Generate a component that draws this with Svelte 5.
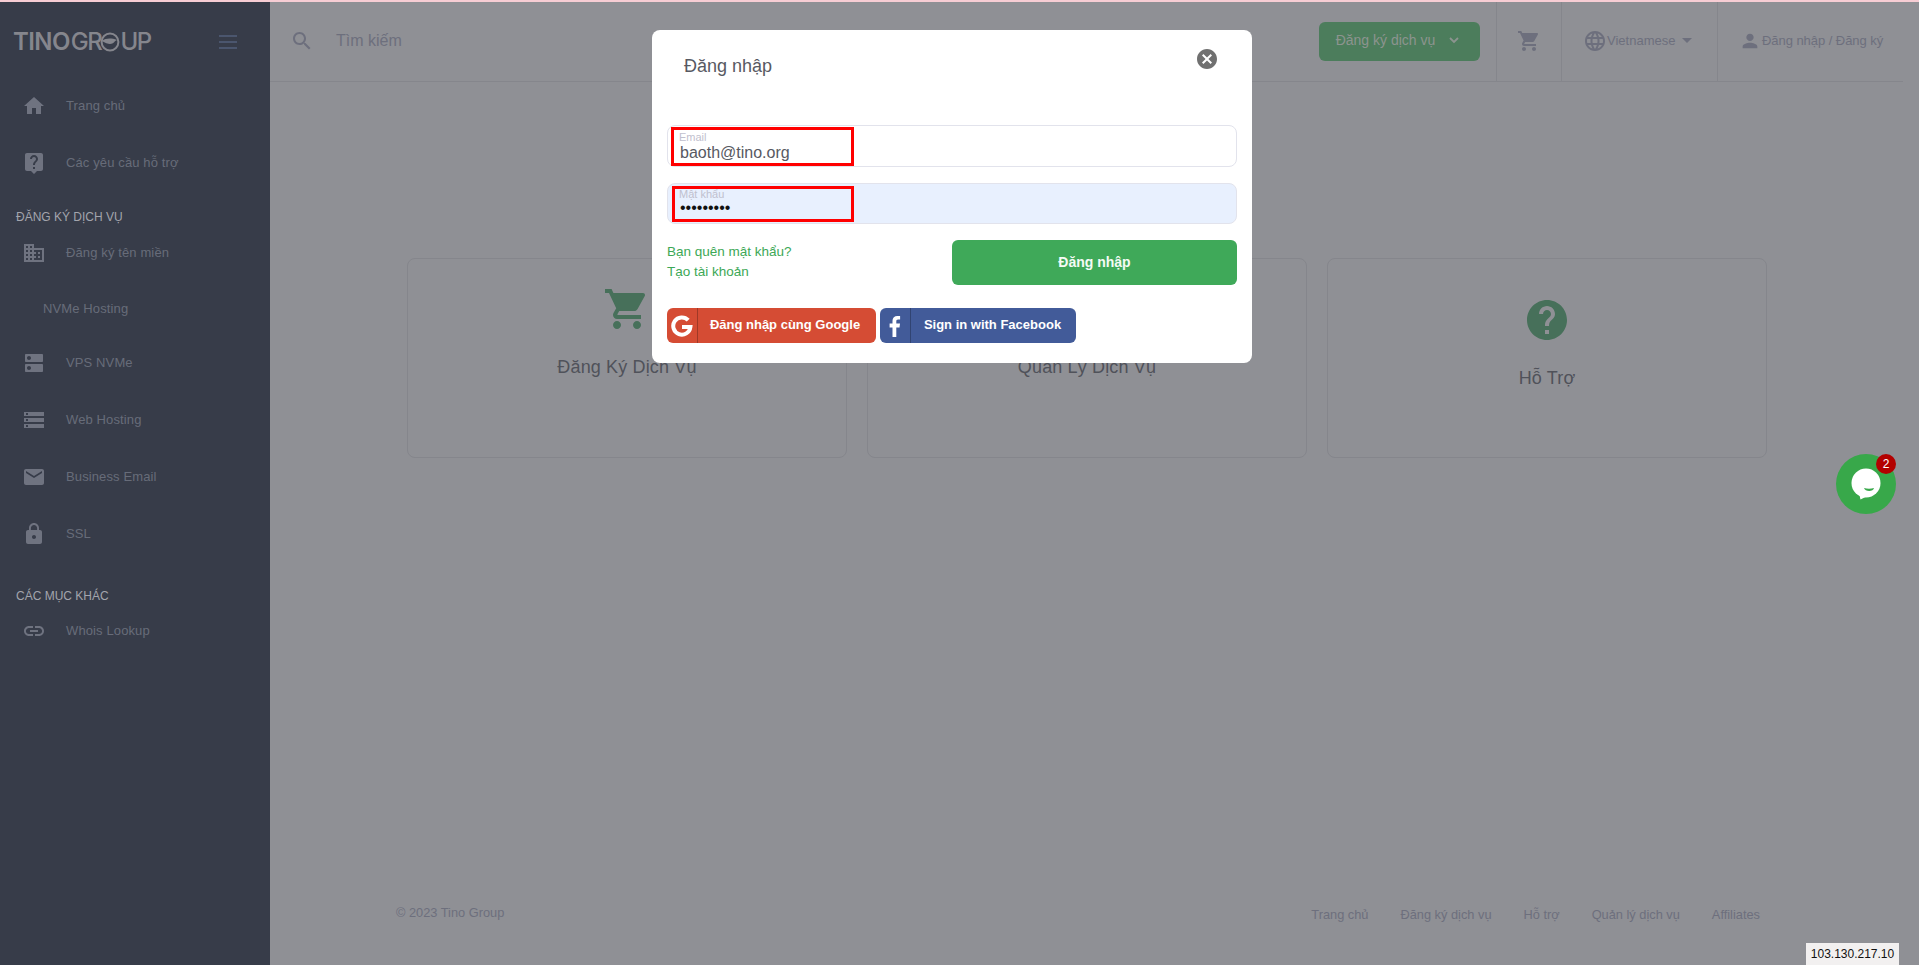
<script>
  const ic = {
    home: 'M10 20v-6h4v6h5v-8h3L12 3 2 12h3v8z',
    help: 'M19 2H5c-1.11 0-2 .9-2 2v14c0 1.1.89 2 2 2h4l3 3 3-3h4c1.1 0 2-.9 2-2V4c0-1.1-.9-2-2-2zm-6 16h-2v-2h2v2zm2.07-7.75l-.9.92C13.45 11.9 13 12.5 13 14h-2v-.5c0-1.1.45-2.1 1.17-2.83l1.24-1.26c.37-.36.59-.86.59-1.41 0-1.1-.9-2-2-2s-2 .9-2 2H8c0-2.21 1.79-4 4-4s4 1.79 4 4c0 .88-.36 1.68-.93 2.25z',
    domain: 'M12 7V3H2v18h20V7H12zM6 19H4v-2h2v2zm0-4H4v-2h2v2zm0-4H4V9h2v2zm0-4H4V5h2v2zm4 12H8v-2h2v2zm0-4H8v-2h2v2zm0-4H8V9h2v2zm0-4H8V5h2v2zm10 12h-8v-2h2v-2h-2v-2h2v-2h-2V9h8v10zm-2-8h-2v2h2v-2zm0 4h-2v2h2v-2z',
    dns: 'M20 13H4c-.55 0-1 .45-1 1v6c0 .55.45 1 1 1h16c.55 0 1-.45 1-1v-6c0-.55-.45-1-1-1zM7 19c-1.1 0-2-.9-2-2s.9-2 2-2 2 .9 2 2-.9 2-2 2zM20 3H4c-.55 0-1 .45-1 1v6c0 .55.45 1 1 1h16c.55 0 1-.45 1-1V4c0-.55-.45-1-1-1zM7 9c-1.1 0-2-.9-2-2s.9-2 2-2 2 .9 2 2-.9 2-2 2z',
    storage: 'M2 20h20v-4H2v4zm2-3h2v2H4v-2zM2 4v4h20V4H2zm4 3H4V5h2v2zm-4 7h20v-4H2v4zm2-3h2v2H4v-2z',
    email: 'M20 4H4c-1.1 0-1.99.9-1.99 2L2 18c0 1.1.9 2 2 2h16c1.1 0 2-.9 2-2V6c0-1.1-.9-2-2-2zm0 4l-8 5-8-5V6l8 5 8-5v2z',
    lock: 'M18 8h-1V6c0-2.76-2.24-5-5-5S7 3.24 7 6v2H6c-1.1 0-2 .9-2 2v10c0 1.1.9 2 2 2h12c1.1 0 2-.9 2-2V10c0-1.1-.9-2-2-2zm-6 9c-1.1 0-2-.9-2-2s.9-2 2-2 2 .9 2 2-.9 2-2 2zm3.1-9H8.9V6c0-1.71 1.39-3.1 3.1-3.1 1.71 0 3.1 1.39 3.1 3.1v2z',
    link: 'M3.9 12c0-1.71 1.39-3.1 3.1-3.1h4V7H7c-2.76 0-5 2.24-5 5s2.24 5 5 5h4v-1.9H7c-1.71 0-3.1-1.39-3.1-3.1zM8 13h8v-2H8v2zm9-6h-4v1.9h4c1.71 0 3.1 1.39 3.1 3.1s-1.39 3.1-3.1 3.1h-4V17h4c2.76 0 5-2.24 5-5s-2.24-5-5-5z',
    search: 'M15.5 14h-.79l-.28-.27C15.41 12.59 16 11.11 16 9.5 16 5.91 13.09 3 9.5 3S3 5.91 3 9.5 5.91 16 9.5 16c1.61 0 3.09-.59 4.23-1.57l.27.28v.79l5 4.99L20.49 19l-4.99-5zm-6 0C7.01 14 5 11.99 5 9.5S7.01 5 9.5 5 14 7.01 14 9.5 11.99 14 9.5 14z',
    cart: 'M7 18c-1.1 0-1.99.9-1.99 2S5.9 22 7 22s2-.9 2-2-.9-2-2-2zM1 2v2h2l3.6 7.59-1.35 2.45c-.16.28-.25.61-.25.96 0 1.1.9 2 2 2h12v-2H7.42c-.14 0-.25-.11-.25-.25l.03-.12.9-1.63h7.45c.75 0 1.41-.41 1.75-1.03l3.58-6.47c.08-.14.12-.31.12-.48 0-.55-.45-1-1-1H5.21l-.94-2H1zm16 16c-1.1 0-1.99.9-1.99 2s.89 2 1.99 2 2-.9 2-2-.9-2-2-2z',
    globe: 'M11.99 2C6.47 2 2 6.48 2 12s4.47 10 9.99 10C17.52 22 22 17.52 22 12S17.52 2 11.99 2zm6.93 6h-2.95c-.32-1.25-.78-2.45-1.38-3.56 1.84.63 3.37 1.91 4.33 3.56zM12 4.04c.83 1.2 1.48 2.53 1.91 3.96h-3.82c.43-1.43 1.08-2.76 1.91-3.96zM4.26 14C4.1 13.36 4 12.69 4 12s.1-1.36.26-2h3.38c-.08.66-.14 1.32-.14 2 0 .68.06 1.34.14 2H4.26zm.82 2h2.95c.32 1.25.78 2.45 1.38 3.56-1.84-.63-3.37-1.9-4.33-3.56zm2.95-8H5.08c.96-1.66 2.49-2.93 4.33-3.56C8.81 5.55 8.35 6.75 8.03 8zM12 19.96c-.83-1.2-1.48-2.53-1.91-3.96h3.82c-.43 1.43-1.08 2.76-1.91 3.96zM14.34 14H9.66c-.09-.66-.16-1.32-.16-2 0-.68.07-1.35.16-2h4.68c.09.65.16 1.32.16 2 0 .68-.07 1.34-.16 2zm.25 5.56c.6-1.11 1.06-2.31 1.38-3.56h2.95c-.96 1.65-2.49 2.93-4.33 3.56zM16.36 14c.08-.66.14-1.32.14-2 0-.68-.06-1.34-.14-2h3.38c.16.64.26 1.31.26 2s-.1 1.36-.26 2h-3.38z',
    person: 'M12 12c2.21 0 4-1.79 4-4s-1.79-4-4-4-4 1.79-4 4 1.79 4 4 4zm0 2c-2.67 0-8 1.34-8 4v2h16v-2c0-2.66-5.33-4-8-4z',
    circleHelp: 'M12 2C6.48 2 2 6.48 2 12s4.48 10 10 10 10-4.48 10-10S17.52 2 12 2zm1 17h-2v-2h2v2zm2.07-7.75l-.9.92C13.45 12.9 13 13.5 13 15h-2v-.5c0-1.1.45-2.1 1.17-2.83l1.24-1.26c.37-.36.59-.86.59-1.41 0-1.1-.9-2-2-2s-2 .9-2 2H8c0-2.21 1.79-4 4-4s4 1.79 4 4c0 .88-.36 1.68-.93 2.25z',
    cancel: 'M12 2C6.47 2 2 6.47 2 12s4.47 10 10 10 10-4.47 10-10S17.53 2 12 2zm5 13.59L15.59 17 12 13.41 8.41 17 7 15.59 10.59 12 7 8.41 8.41 7 12 10.59 15.59 7 17 8.41 13.41 12 17 15.59z',
    settings: 'M4 6h16v4H4zM4 14h16v4H4z'
  };
  const cards = [
    { icon: ic.cart, title: 'Đăng Ký Dịch Vụ' },
    { icon: ic.settings, title: 'Quản Lý Dịch Vụ' },
    { icon: ic.circleHelp, title: 'Hỗ Trợ', low: true }
  ];
  const footer = ['Trang chủ', 'Đăng ký dịch vụ', 'Hỗ trợ', 'Quản lý dịch vụ', 'Affiliates'];
</script>

{#snippet icon(d, size, cls = '')}
  <svg class={cls} width={size} height={size} viewBox="0 0 24 24" fill="currentColor" aria-hidden="true"><path {d} /></svg>
{/snippet}

{#snippet navItem(d, label)}
  <div class="nav-item">
    {@render icon(d, 24, 'nav-icon')}
    <span>{label}</span>
  </div>
{/snippet}

<div class="top-line"></div>
<div class="page">
  <aside class="sidebar">
    <div class="brand">
      <div class="logo">
        <span class="logo-a">TINO</span><span class="logo-b">GR</span><svg class="logo-o" width="20" height="20" viewBox="0 0 20 20" fill="none" stroke="currentColor" aria-hidden="true"><circle cx="10" cy="10" r="8.4" stroke-width="2"/><path d="M2 9c4-3 9-3 15-1-3 1-3 4-7 4-2 0-5-1-8-3z" fill="currentColor" stroke="none"/></svg><span class="logo-b">UP</span>
      </div>
      <div class="burger"><i></i><i></i><i></i></div>
    </div>
    <nav>
      {@render navItem(ic.home, 'Trang chủ')}
      {@render navItem(ic.help, 'Các yêu cầu hỗ trợ')}
      <div class="section first">ĐĂNG KÝ DỊCH VỤ</div>
      {@render navItem(ic.domain, 'Đăng ký tên miền')}
      <div class="nav-sub">NVMe Hosting</div>
      {@render navItem(ic.dns, 'VPS NVMe')}
      {@render navItem(ic.storage, 'Web Hosting')}
      {@render navItem(ic.email, 'Business Email')}
      {@render navItem(ic.lock, 'SSL')}
      <div class="section second">CÁC MỤC KHÁC</div>
      {@render navItem(ic.link, 'Whois Lookup')}
    </nav>
  </aside>

  <main class="main">
    <header class="header">
      <div class="search">
        {@render icon(ic.search, 24)}
        <span>Tìm kiếm</span>
      </div>
      <div class="service-wrap">
        <button class="service">Đăng ký dịch vụ
          <svg width="14" height="14" viewBox="0 0 14 14" fill="none" stroke="currentColor" stroke-width="1.8" aria-hidden="true"><path d="M3 5l4 4 4-4"/></svg>
        </button>
      </div>
      <div class="cell cart">{@render icon(ic.cart, 24)}</div>
      <div class="cell lang">
        {@render icon(ic.globe, 24)}<span>Vietnamese</span><i class="caret"></i>
      </div>
      <div class="cell user">
        {@render icon(ic.person, 22)}<span>Đăng nhập / Đăng ký</span>
      </div>
    </header>

    <section class="cards">
      {#each cards as c}
        <div class="card" class:low={c.low}>
          <span class="card-icon">{@render icon(c.icon, 48)}</span>
          <h3>{c.title}</h3>
        </div>
      {/each}
    </section>

    <footer class="footer">
      <span class="copy">© 2023 Tino Group</span>
      <div class="foot-links">
        {#each footer as f}<span>{f}</span>{/each}
      </div>
    </footer>
  </main>
</div>

<div class="backdrop">
  <div class="modal">
    <div class="modal-head">
      <h2>Đăng nhập</h2>
      <button class="close" aria-label="Đóng">{@render icon(ic.cancel, 24)}</button>
    </div>
    <div class="field">
      <label for="em">Email</label>
      <input id="em" type="text" value="baoth@tino.org" />
      <span class="mark"></span>
    </div>
    <div class="field filled">
      <label for="pw">Mật khẩu</label>
      <input id="pw" type="password" value="123456789" />
      <span class="mark"></span>
    </div>
    <div class="actions">
      <div class="links">
        <span>Bạn quên mật khẩu?</span>
        <span>Tạo tài khoản</span>
      </div>
      <button class="login">Đăng nhập</button>
    </div>
    <div class="socials">
      <button class="social google">
        <span class="social-ic">
          <svg width="22" height="22" viewBox="0 0 22 22" fill="none" stroke="#fff" stroke-width="4" aria-hidden="true"><path d="M17.2 5.2A8.6 8.6 0 1 0 19.4 12H11"/></svg>
        </span>
        <span class="social-tx">Đăng nhập cùng Google</span>
      </button>
      <button class="social facebook">
        <span class="social-ic">
          <svg width="12" height="22" viewBox="0 0 12 22" fill="#fff" aria-hidden="true"><path d="M3.500 22V12.400H.6V8.600h2.900V6C3.500 2.800 5.400 1 8.300 1c1.300 0 2.500.1 2.800.1v3.400H9.200C7.600 4.500 7.300 5.300 7.300 6.400v2.200h3.700l-.5 3.800H7.300V22z"/></svg>
        </span>
        <span class="social-tx">Sign in with Facebook</span>
      </button>
    </div>
  </div>
</div>

<div class="chat">
  <svg width="38" height="38" viewBox="0 0 38 38" aria-hidden="true"><circle cx="19" cy="18" r="14.500" fill="#fff"/><path d="M12 28l1.500 6.500 8-4z" fill="#fff"/><path d="M17 23c3 1 7 1 10 0-.5 4-9 4-10 0z" fill="#38a84a"/></svg>
  <span class="badge">2</span>
</div>
<div class="ip">103.130.217.10</div>

<style>
  :global(body) {
    margin: 0;
    background: #8f9095;
    font-family: "Liberation Sans", Arial, sans-serif;
    overflow: hidden;
  }
  .top-line {
    height: 2px;
    background: #f7cdd4;
  }
  .page {
    display: flex;
    height: 963px;
  }
  .sidebar {
    width: 270px;
    flex: none;
    background: #373c49;
    color: #676c79;
    font-size: 13px;
    letter-spacing: 0.12px;
  }
  .brand {
    height: 75px;
    display: flex;
    align-items: center;
    padding: 0 33px 0 13px;
    justify-content: space-between;
  }
  .logo {
    display: flex;
    align-items: center;
    color: #85868d;
    font-family: Inter, "Liberation Sans", sans-serif;
    font-size: 24px;
    line-height: 24px;
    letter-spacing: -0.6px;
    margin-top: 5px;
  }
  .logo-a { font-weight: 600; margin-right: 1px; }
  .logo-b { font-weight: 500; letter-spacing: -1.4px; }
  .logo-o { margin: 0 0 0 -1px; }
  .burger {
    width: 18px;
    display: flex;
    flex-direction: column;
    gap: 4px;
    margin-top: 4px;
  }
  .burger i {
    display: block;
    height: 2px;
    background: #4b566e;
  }
  .nav-item {
    height: 57px;
    display: flex;
    align-items: center;
    padding-left: 22px;
    gap: 20px;
  }
  :global(.nav-icon) { flex: none; color: #6f7380; }
  .section {
    color: #a3a5ad;
    font-size: 12px;
    padding-left: 16px;
    line-height: 14px;
    letter-spacing: 0;
  }
  .section.first { margin-top: 19px; }
  .section.second { margin-top: 27px; margin-bottom: -1px; }
  .nav-sub {
    height: 52px;
    display: flex;
    align-items: center;
    padding-left: 43px;
    margin-top: 1px;
  }
  .main {
    flex: 1;
    display: flex;
    flex-direction: column;
    min-width: 0;
  }
  .header {
    height: 79px;
    margin-right: 16px;
    border-bottom: 1px solid #85868c;
    display: flex;
    align-items: stretch;
    color: #6d6f7d;
    font-size: 13px;
  }
  .search {
    flex: 1;
    display: flex;
    align-items: center;
    padding: 0 0 2px 20px;
    gap: 22px;
    font-size: 16px;
    color: #6d6f7d;
  }
  .service-wrap {
    display: flex;
    align-items: center;
    padding-right: 16px;
  }
  .service {
    width: 161px;
    height: 39px;
    margin-top: -1px;
    border: 0;
    border-radius: 6px;
    background: #4c7d5c;
    color: #8c948f;
    font: 14px "Liberation Sans", Arial, sans-serif;
    display: flex;
    align-items: center;
    justify-content: center;
    gap: 12px;
    padding: 0 2px 2px 0;
  }
  .cell {
    display: flex;
    align-items: center;
    border-left: 1px solid #85868c;
    padding-bottom: 2px;
    box-sizing: border-box;
  }
  .cart { width: 65px; justify-content: center; }
  .lang { width: 156px; padding-left: 21px; font-size: 13px; }
  .caret {
    margin-left: 7px;
    border: 5px solid transparent;
    border-top: 5px solid #6d6f7d;
    border-bottom: 0;
  }
  .user { width: 186px; padding-left: 21px; gap: 1px; letter-spacing: -0.05px; }
  .cards {
    display: grid;
    grid-template-columns: repeat(3, 440px);
    gap: 20px;
    padding: 176px 0 0 137px;
  }
  .card {
    height: 200px;
    box-sizing: border-box;
    border: 1px solid #85868c;
    border-radius: 8px;
    padding-top: 26px;
    text-align: center;
  }
  .card.low { padding-top: 37px; }
  .card-icon {
    display: block;
    height: 48px;
    color: #47705a;
  }
  .card h3 {
    margin: 23px 0 0;
    font-size: 18px;
    font-weight: 400;
    line-height: 22px;
    letter-spacing: 0.15px;
    color: #50525a;
  }
  .footer {
    margin-top: auto;
    display: flex;
    justify-content: space-between;
    padding: 0 159px 43px 126px;
    font-size: 12.8px;
    color: #6d6f7d;
    line-height: 15px;
  }
  .copy { margin-top: -2px; }
  .foot-links { display: flex; gap: 32px; }
  .backdrop {
    position: fixed;
    inset: 0;
  }
  .modal {
    position: absolute;
    left: 652px;
    top: 30px;
    width: 600px;
    height: 333px;
    box-sizing: border-box;
    background: #fff;
    border-radius: 8px;
    padding: 0 15px;
  }
  .modal-head {
    height: 95px;
    display: flex;
    justify-content: space-between;
    padding: 0 18px 0 17px;
  }
  .modal-head h2 {
    margin: 25px 0 0;
    font-size: 18px;
    font-weight: 400;
    line-height: 22px;
    color: #575962;
  }
  .close {
    border: 0;
    background: none;
    padding: 0;
    margin-top: 17px;
    width: 24px;
    height: 24px;
    color: #707070;
  }
  .field {
    position: relative;
    height: 42px;
    margin-bottom: 16px;
  }
  .field.filled {
    height: 41px;
  }
  .field input {
    width: 100%;
    height: 100%;
    box-sizing: border-box;
    border: 1px solid #e2e3ec;
    border-radius: 8px;
    padding: 14px 12px 0;
    font: 16px "Liberation Sans", Arial, sans-serif;
    color: #575962;
    background: #fff;
    outline: none;
  }
  .field.filled input {
    background: #e8f0fe;
    color: #111;
    padding-top: 8px;
  }
  .field label {
    position: absolute;
    left: 12px;
    top: 6px;
    font-size: 11px;
    line-height: 12px;
    color: #bfc0ce;
    z-index: 1;
  }
  .field.filled label { top: 5px; }
  .mark {
    position: absolute;
    left: 4px;
    top: 2px;
    width: 183px;
    bottom: 1px;
    box-sizing: border-box;
    border: 3px solid #f00;
    pointer-events: none;
  }
  .field.filled .mark {
    left: 5px;
    width: 182px;
    top: 3px;
    bottom: 2px;
  }
  .actions {
    display: flex;
    justify-content: space-between;
    margin-bottom: 23px;
  }
  .links {
    display: flex;
    flex-direction: column;
    gap: 4px;
    font-size: 13.5px;
    line-height: 16px;
    color: #3ca856;
    padding-top: 4px;
  }
  .login {
    width: 285px;
    height: 45px;
    border: 0;
    border-radius: 6px;
    background: #3fa959;
    color: #f4fbf5;
    font: 700 14px "Liberation Sans", Arial, sans-serif;
    padding: 0 0 2px;
  }
  .socials { display: flex; gap: 4px; }
  .social {
    height: 35px;
    border: 0;
    border-radius: 6px;
    color: #fff;
    display: flex;
    align-items: stretch;
    padding: 0;
    font: 700 13px "Liberation Sans", Arial, sans-serif;
  }
  .google { width: 209px; background: #d54c34; }
  .google .social-tx { padding-right: 4px; }
  .facebook { width: 196px; background: #425b99; }
  .facebook .social-tx { padding-right: 2px; }
  .social-ic {
    width: 31px;
    flex: none;
    display: flex;
    align-items: center;
    justify-content: center;
    border-right: 1px solid rgba(0, 0, 0, 0.25);
    box-sizing: border-box;
  }
  .social-tx {
    flex: 1;
    display: flex;
    align-items: center;
    justify-content: center;
    padding-bottom: 2px;
  }
  .chat {
    position: fixed;
    left: 1836px;
    top: 454px;
    width: 60px;
    height: 60px;
    border-radius: 50%;
    background: #38a84a;
    display: flex;
    align-items: center;
    justify-content: center;
  }
  .badge {
    position: absolute;
    right: 0;
    top: 0;
    width: 20px;
    height: 20px;
    border-radius: 50%;
    background: #b30000;
    color: #fff;
    font-size: 12px;
    line-height: 20px;
    text-align: center;
  }
  .ip {
    position: fixed;
    left: 1806px;
    bottom: 0;
    width: 93px;
    height: 22px;
    background: #f2f0f0;
    color: #111;
    font-size: 12px;
    line-height: 22px;
    text-align: center;
  }
</style>
